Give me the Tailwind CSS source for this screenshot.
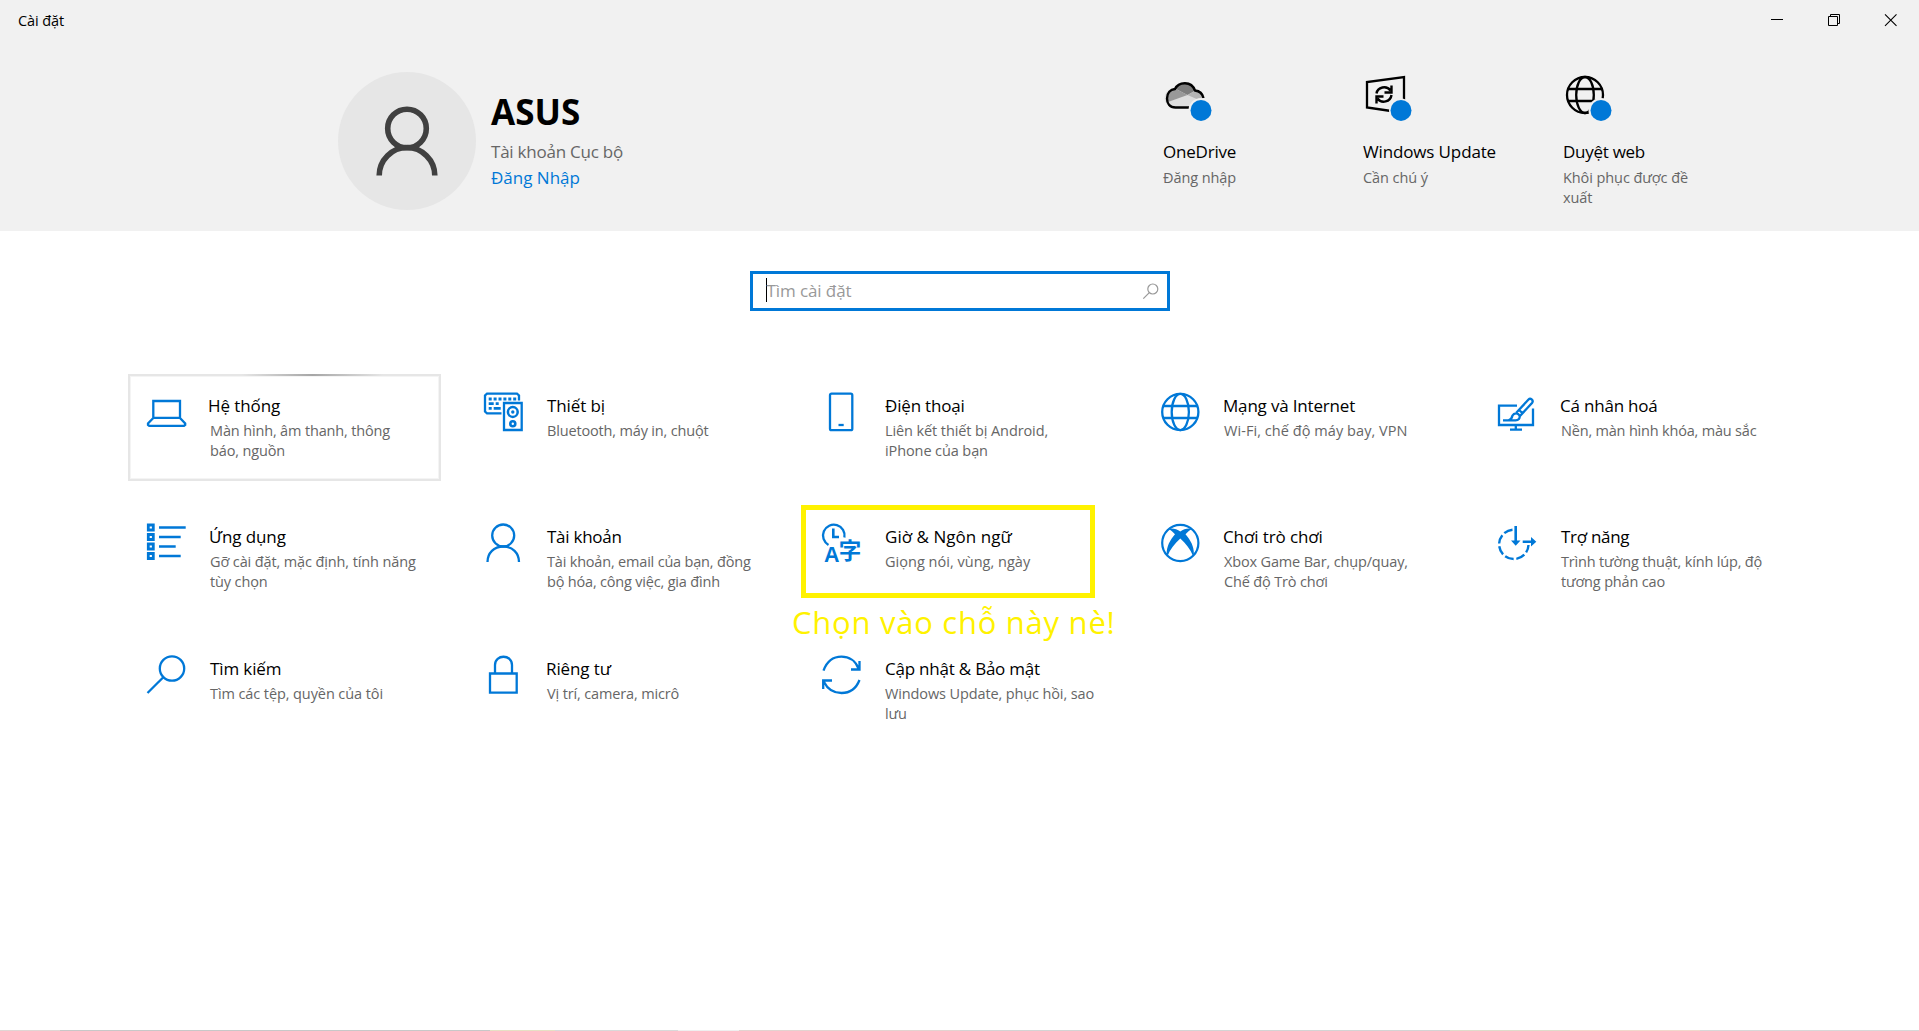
<!DOCTYPE html>
<html lang="vi">
<head>
<meta charset="utf-8">
<title>Cài đặt</title>
<script src="https://cdn.jsdelivr.net/npm/@tailwindcss/browser@4"></script>
</head>
<body class="flex h-screen flex-col overflow-hidden bg-white font-['Open_Sans','Noto_Sans',sans-serif] text-black">

<header class="h-[231px] shrink-0 bg-[#f1f1f1]">
  <!-- title bar -->
  <div class="flex h-10 items-start justify-between pl-[18px]">
    <div class="pt-[11px] text-[14.5px] leading-5 tracking-[-0.11px]">Cài đặt</div>
    <div class="flex">
      <svg class="h-10 w-[57px]" viewBox="0 0 57 40" fill="none" stroke="#000"><path d="M23 19.500h12"/></svg>
      <svg class="h-10 w-[57px]" viewBox="0 0 57 40" fill="none" stroke="#000"><path d="M23.500 16.500h9v9h-9zM25.500 16.500v-2h9v9h-2"/></svg>
      <svg class="h-10 w-[57px]" viewBox="0 0 57 40" fill="none" stroke="#000" stroke-width="1.100"><path d="M23 14.300l11.500 11.500M34.500 14.300L23 25.800"/></svg>
    </div>
  </div>

  <div class="flex pl-[338px]">
    <div class="mt-8 size-[138px] rounded-full bg-[#e6e6e6]">
      <svg class="size-full" viewBox="0 0 138 138" fill="none" stroke="#404040" stroke-width="5.600"><circle cx="69" cy="56.500" r="19.300"/><path d="M41.200 103.500C41.200 88 54 75.500 69 75.500S96.800 88 96.800 103.500"/></svg>
    </div>
    <div class="ml-[15px] w-[672px] pt-[52px]">
      <div class="text-[35px] leading-10 font-bold">ASUS</div>
      <div class="mt-[7px] text-[17px] leading-[26px] tracking-[-0.23px] text-[#666]">Tài khoản Cục bộ</div>
      <div class="text-[17px] leading-[26px] text-[#0078d7]">Đăng Nhập</div>
    </div>

    <div class="w-[200px] pt-7">
      <svg class="h-[72px] w-[60px]" viewBox="0 0 60 72">
        <path d="M10 39.500A9.500 9.500 0 0 1 12 20.500C16 13.500 28 12 32.500 22.500C37 23 40 25.500 40.500 30V39.500Z" fill="#dedede"/>
        <path d="M12 20.500C17 12.500 29 13 32.500 22.500L24.500 27Z" fill="#7d7d7d"/>
        <path d="M12 20.500L24.500 27L5 34C3 27 6 21 12 20.500Z" fill="#999"/>
        <path d="M24.500 27L32.500 22.500C37 23 40 25 41 30L36 32Z" fill="#b5b5b5"/>
        <path d="M29 39.500H12.500C6.500 39.500 4 35 4 30.500C4 25 7.500 21.500 12 21C15.500 13.500 28.500 12.500 32 22.500C36.500 23 39.500 25.500 40.500 30" fill="none" stroke="#000" stroke-width="2.400"/>
        <circle cx="38" cy="42.400" r="12.500" fill="#f1f1f1"/><circle cx="38" cy="42.400" r="10.500" fill="#0078d7"/>
      </svg>
      <div class="text-[17px] leading-6 tracking-[-0.2px]">OneDrive</div>
      <div class="mt-1 text-[14.5px] leading-5 tracking-[-0.09px] text-[#666]">Đăng nhập</div>
    </div>
    <div class="w-[200px] pt-7">
      <svg class="h-[72px] w-[60px]" viewBox="0 0 60 72">
        <path d="M28 43L4 39.500V14L41 9V36" fill="none" stroke="#000" stroke-width="2.300"/>
        <path d="M13.500 25.500C14.500 19 23.500 17 27.500 22.500M28.500 17.500v7h-7M28.500 27C27.500 34 18.500 36 14.500 30.500M13.500 35.500v-7h7" fill="none" stroke="#000" stroke-width="2.400"/>
        <circle cx="38" cy="42.400" r="12" fill="#f1f1f1"/><circle cx="38" cy="42.400" r="10.500" fill="#0078d7"/>
      </svg>
      <div class="text-[17px] leading-6 tracking-[-0.14px]">Windows Update</div>
      <div class="mt-1 text-[14.5px] leading-5 tracking-[-0.07px] text-[#666]">Cần chú ý</div>
    </div>
    <div class="w-[140px] pt-7">
      <svg class="h-[72px] w-[60px]" viewBox="0 0 60 72">
        <g fill="none" stroke="#000" stroke-width="2.300"><circle cx="22" cy="27" r="18"/><ellipse cx="22" cy="27" rx="8.800" ry="18"/><path d="M5 21h34M5 33h34"/></g>
        <circle cx="38" cy="42.400" r="12.500" fill="#f1f1f1"/><circle cx="38" cy="42.400" r="10.500" fill="#0078d7"/>
      </svg>
      <div class="text-[17px] leading-6 tracking-[-0.27px]">Duyệt web</div>
      <div class="mt-1 text-[14.5px] leading-5 tracking-[-0.08px] text-[#666]">Khôi phục được đề<br>xuất</div>
    </div>
  </div>
</header>

<main class="flex-1">
  <div class="mx-auto mt-10 flex h-10 w-[420px] items-center border-[3px] border-[#0078d7] bg-white pr-[7px] pl-[13px]">
    <div class="mb-0.5 h-6 w-px bg-black"></div>
    <div class="flex-1 text-[17px] leading-6 tracking-[-0.1px] text-[#999]">Tìm cài đặt</div>
    <svg class="size-5" viewBox="0 0 20 20" fill="none" stroke="#999" stroke-width="1.200"><circle cx="12.800" cy="8" r="5"/><path d="M9.300 11.700L3.300 17.700"/></svg>
  </div>

  <div class="mt-[63px] ml-[128px] grid w-[1690px] grid-cols-5 grid-rows-[131px_132px_132px] text-[14.5px] leading-5 text-[#666]">

    <section class="relative flex h-[107px] w-[313px] border-2 border-[#e6e6e6] pt-[17px] pl-4 inset-ring inset-ring-[#f4f4f4]">
      <div class="absolute -top-[2px] right-14 left-28 h-[2px] bg-linear-to-r from-[#e6e6e6] via-[#a6a6a6] to-[#e6e6e6]"></div>
      <svg class="mr-[24px] size-10 shrink-0 overflow-visible" viewBox="0 0 40 40" fill="none" stroke="#0078d7" stroke-width="2.300"><path d="M7.300 25V8H34V25M7.300 24.800H34M7.300 25L2 30.500V32L3.200 32.800H38L39.200 32V30.500L34 25"/></svg>
      <div class="pt-px"><h2 class="-ml-[2px] text-[17px] leading-6 tracking-[-0.08px] text-black">Hệ thống</h2><p class="mt-[3px] tracking-[-0.15px]">Màn hình, âm thanh, thông<br>báo, nguồn</p></div>
    </section>

    <section class="flex pt-[19px] pl-[18px]">
      <svg class="mr-[23px] size-10 shrink-0 overflow-visible" viewBox="0 0 40 40" fill="none" stroke="#0078d7" stroke-width="2.300"><path d="M17.500 20.300H3L1 18.500V2.500L3 .7H33L35 2.500V7.500"/><path d="M4.700 6H33" stroke-width="2.800" stroke-dasharray="3 1.900"/><path d="M4.700 10.700h5M11.700 10.700h3M4.700 15.300h3M9.700 15.300h7" stroke-width="2.800"/><path d="M20 10H37.700V37H20Z"/><circle cx="28.800" cy="19" r="4.900" stroke-width="2.500"/><circle cx="28.800" cy="19" r="1.700" fill="#0078d7" stroke="none"/><circle cx="28.800" cy="30.700" r="2.500" stroke-width="2.600"/></svg>
      <div class="pt-px"><h2 class="text-[17px] leading-6 tracking-[-0.1px] text-black">Thiết bị</h2><p class="mt-[3px] tracking-[-0.16px]">Bluetooth, máy in, chuột</p></div>
    </section>

    <section class="flex pt-[19px] pl-[18px]">
      <svg class="mr-[23px] size-10 shrink-0 overflow-visible" viewBox="0 0 40 40" fill="none" stroke="#0078d7" stroke-width="2.300"><rect x="8" y=".7" width="22.300" height="36.500" rx="1.500"/><path d="M16.500 32h5.200"/></svg>
      <div class="pt-px"><h2 class="text-[17px] leading-6 tracking-[-0.18px] text-black">Điện thoại</h2><p class="mt-[3px] tracking-[-0.1px]">Liên kết thiết bị Android,<br>iPhone của bạn</p></div>
    </section>

    <section class="flex pt-[19px] pl-[18px]">
      <svg class="mr-[23px] size-10 shrink-0 overflow-visible" viewBox="0 0 40 40" fill="none" stroke="#0078d7" stroke-width="2.300"><circle cx="20.300" cy="19" r="18.100"/><ellipse cx="20.300" cy="19" rx="8.600" ry="18.100"/><path d="M3.300 13H37.300M3.300 25H37.300"/></svg>
      <div class="pt-px"><h2 class="text-[17px] leading-6 tracking-[-0.18px] text-black">Mạng và Internet</h2><p class="mt-[3px] ml-px tracking-[0.06px]">Wi-Fi, chế độ máy bay, VPN</p></div>
    </section>

    <section class="flex pt-[19px] pl-[18px]">
      <svg class="mr-[23px] size-10 shrink-0 overflow-visible" viewBox="0 0 40 40" fill="none" stroke="#0078d7" stroke-width="2.300"><path d="M19 12.700H1V32H35V15.500M17.800 32V36.700M12 36.700H24"/><path d="M5 27.300H17.500C20.500 27.300 22.300 25.300 21.500 22.500C20 19.500 16 19.800 14.500 22.500C14 25 13 26.500 10.500 27.300M18.300 19.800L30.500 6.500C32.500 4.500 35.800 7.300 34.200 9.700L22 23M21 17L24.500 20.200"/></svg>
      <div class="pt-px"><h2 class="-ml-px text-[17px] leading-6 tracking-[-0.2px] text-black">Cá nhân hoá</h2><p class="mt-[3px] tracking-[-0.19px]">Nền, màn hình khóa, màu sắc</p></div>
    </section>

    <section class="flex pt-[19px] pl-[18px]">
      <svg class="mr-[24px] size-10 shrink-0 overflow-visible" viewBox="0 0 40 40" fill="none" stroke="#0078d7" stroke-width="2.800"><path d="M2.300 1h5v5h-5zM2.300 10.500h5v5h-5zM2.300 20h5v5h-5zM2.300 29.500h5v5h-5z"/><path stroke-width="2.300" d="M13 3.500H39.700M13 13H34.700M13 22.500H29.700M13 32H34.700"/></svg>
      <div class="pt-px"><h2 class="-ml-px text-[17px] leading-6 tracking-[-0.11px] text-black">Ứng dụng</h2><p class="mt-[3px] tracking-[-0.12px]">Gỡ cài đặt, mặc định, tính năng<br>tùy chọn</p></div>
    </section>

    <section class="flex pt-[19px] pl-[18px]">
      <svg class="mr-[23px] size-10 shrink-0 overflow-visible" viewBox="0 0 40 40" fill="none" stroke="#0078d7" stroke-width="2.300"><circle cx="19.200" cy="11.500" r="11"/><path d="M3.500 38C3.500 29 10 22.500 19.200 22.500S35 29 35 38"/></svg>
      <div class="pt-px"><h2 class="text-[17px] leading-6 tracking-[-0.25px] text-black">Tài khoản</h2><p class="mt-[3px] whitespace-nowrap tracking-[-0.19px]">Tài khoản, email của bạn, đồng<br>bộ hóa, công việc, gia đình</p></div>
    </section>

    <section class="relative flex pt-[19px] pl-[18px]">
      <div class="absolute top-0 -left-[3px] h-[93px] w-[294px] border-[5px] border-[#fff200]"></div>
      <div class="absolute top-[95px] -left-[12px] text-[31px] leading-[44px] tracking-[0.74px] whitespace-nowrap text-[#fff200]">Chọn vào chỗ này nè!</div>
      <svg class="mr-[23px] size-10 shrink-0 overflow-visible" viewBox="0 0 40 40" fill="none" stroke="#0078d7" stroke-width="2.300"><path d="M6.500 20.900A10.800 10.800 0 1 1 22.400 13.500"/><path d="M11.300 4.500V13H17" stroke-width="2.600"/><g fill="#0078d7" stroke="none"><text x="2" y="38" font-size="22.500" font-weight="700" font-family="Liberation Sans" textLength="15.500" lengthAdjust="spacingAndGlyphs">A</text><text x="16.700" y="34.500" font-size="22.500" font-weight="700" font-family="Noto Sans CJK JP, sans-serif">字</text></g></svg>
      <div class="pt-px"><h2 class="text-[17px] leading-6 tracking-[0.04px] text-black">Giờ &amp; Ngôn ngữ</h2><p class="mt-[3px] tracking-[0.02px]">Giọng nói, vùng, ngày</p></div>
    </section>

    <section class="flex pt-[19px] pl-[18px]">
      <svg class="mr-[23px] size-10 shrink-0 overflow-visible" viewBox="0 0 40 40" fill="none" stroke="#0078d7" stroke-width="2.200"><circle cx="20.300" cy="19" r="18.100"/><path d="M8.500 5C12.500 3.900 17 5.300 20.300 7.500C23.600 5.300 28 3.900 32 5C29.500 6.300 27.500 8 25.500 10.300C30.500 16 34.300 23 33.800 30L32.800 31.500C30.500 25.500 26 19.500 20.300 14.500C14.600 19.500 10 25.500 7.800 31.500L6.800 30C6.300 23 10 16 15 10.300C13 8 11 6.300 8.500 5Z" fill="#0078d7" stroke="none"/></svg>
      <div class="pt-px"><h2 class="text-[17px] leading-6 tracking-[-0.11px] text-black">Chơi trò chơi</h2><p class="mt-[3px] ml-px tracking-[-0.16px]">Xbox Game Bar, chụp/quay,<br>Chế độ Trò chơi</p></div>
    </section>

    <section class="flex pt-[19px] pl-[18px]">
      <svg class="mr-[23px] size-10 shrink-0 overflow-visible" viewBox="0 0 40 40" fill="none" stroke="#0078d7" stroke-width="2.400"><path d="M14.500 5.700A14.700 14.700 0 1 0 30.500 21" stroke-dasharray="9 2.800"/><path d="M17.700 2V18M24.700 17.700H35" stroke-width="2.600"/><path d="M13 16.500h9.500L17.700 21.800zM33 13v9.400L38.300 17.700z" fill="#0078d7" stroke="none"/></svg>
      <div class="pt-px"><h2 class="text-[17px] leading-6 tracking-[-0.3px] text-black">Trợ năng</h2><p class="mt-[3px] tracking-[-0.17px]">Trình tường thuật, kính lúp, độ<br>tương phản cao</p></div>
    </section>

    <section class="flex pt-[19px] pl-[18px]">
      <svg class="mr-[24px] size-10 shrink-0 overflow-visible" viewBox="0 0 40 40" fill="none" stroke="#0078d7" stroke-width="2.300"><circle cx="26" cy="12.500" r="12.200"/><path d="M17.300 21.200L1.500 37"/></svg>
      <div class="pt-px"><h2 class="text-[17px] leading-6 tracking-[-0.11px] text-black">Tìm kiếm</h2><p class="mt-[3px] tracking-[-0.09px]">Tìm các tệp, quyền của tôi</p></div>
    </section>

    <section class="flex pt-[19px] pl-[18px]">
      <svg class="mr-[23px] size-10 shrink-0 overflow-visible" viewBox="0 0 40 40" fill="none" stroke="#0078d7" stroke-width="2.300"><path d="M6 17.500H32.700V36.700H6ZM11 17.500V9C11 -2 28 -2 28 9V17.500"/></svg>
      <div class="pt-px"><h2 class="-ml-px text-[17px] leading-6 tracking-[-0.11px] text-black">Riêng tư</h2><p class="mt-[3px] tracking-[-0.14px]">Vị trí, camera, micrô</p></div>
    </section>

    <section class="flex pt-[19px] pl-[18px]">
      <svg class="mr-[23px] size-10 shrink-0 overflow-visible" viewBox="0 0 40 40" fill="none" stroke="#0078d7" stroke-width="2.300"><path d="M1.500 14.700C5 5 12 .7 19.500 .7C27 .7 33.500 5 36.500 12.500M37.500 5V13.500H29M37.500 24C34 33 27 37 19.500 37C12 37 5.500 33 2 26M1.200 33V24.500H10"/></svg>
      <div class="pt-px"><h2 class="text-[17px] leading-6 tracking-[-0.22px] text-black">Cập nhật &amp; Bảo mật</h2><p class="mt-[3px] tracking-[-0.12px]">Windows Update, phục hồi, sao<br>lưu</p></div>
    </section>
  </div>
</main>

<!-- sliver of the desktop below the window -->
<div class="flex h-px shrink-0">
  <div class="w-[60px] bg-[#e0d6d4]"></div><div class="w-[430px] bg-[#c8c8c8]"></div><div class="w-[65px] bg-[#e6e0c4]"></div><div class="w-[123px] bg-[#d9d9d9]"></div><div class="w-[61px] bg-[#efefef]"></div><div class="w-[221px] bg-[#e3d3d0]"></div><div class="w-[490px] bg-[#d4d4d4]"></div><div class="w-[120px] bg-[#dfdccb]"></div><div class="w-[130px] bg-[#f0d9cc]"></div><div class="flex-1 bg-[#d8d8d8]"></div>
</div>
</body>
</html>
